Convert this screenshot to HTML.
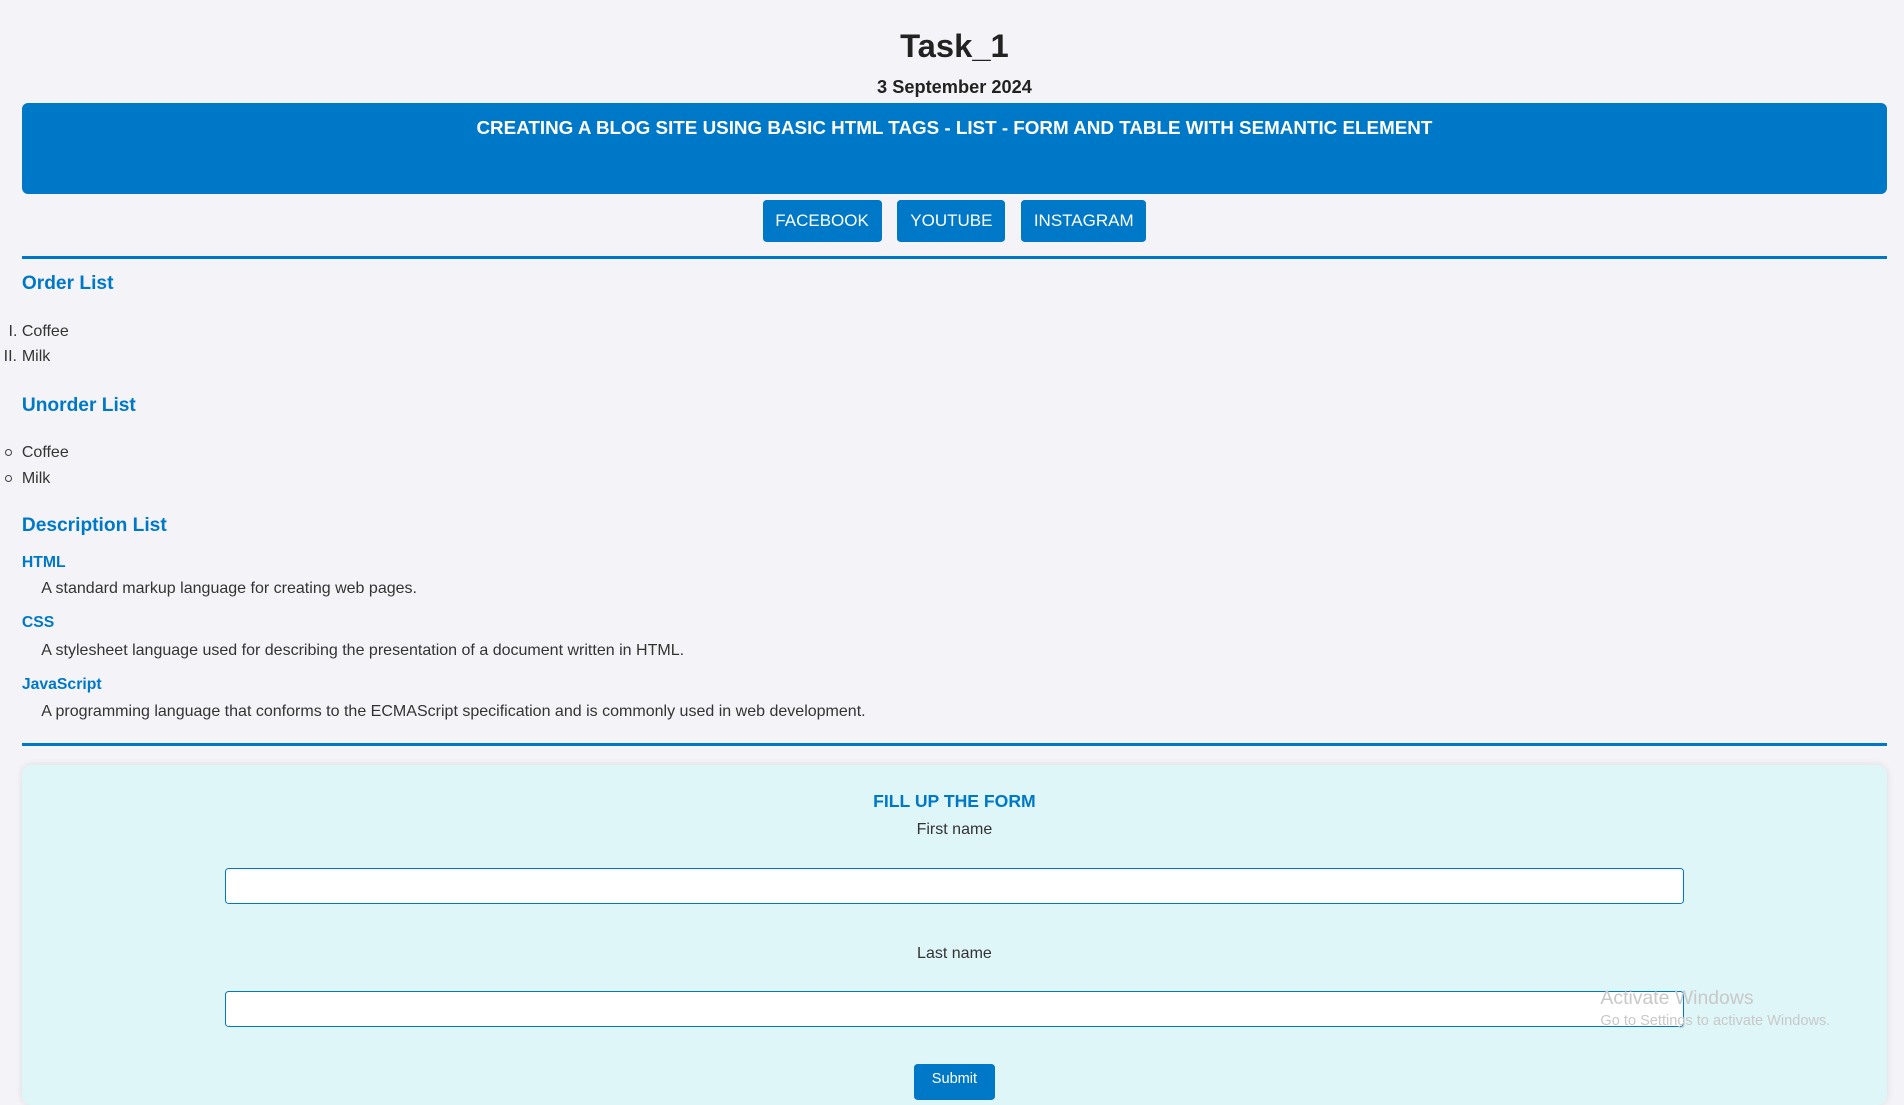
<!DOCTYPE html>
<html><head><meta charset="utf-8"><style>
html{zoom:1.21429}
body{margin:0;width:1568px;height:892px;overflow:hidden;background:#f4f4f8;font-family:"Liberation Sans",Arial,sans-serif;color:#333;position:relative}
.a{position:absolute;white-space:nowrap}
.c{left:0;width:1572px;text-align:center}
.blue{color:#0078c8}
.btn{position:absolute;top:165px;height:34px;background:#0078c8;color:#fff;border-radius:3px;font-size:14px;line-height:34px;text-align:center}
.t{font-size:13.2px;line-height:16px}
h3{margin:0;font-size:15.8px;font-weight:bold;color:#0078c8;position:absolute;left:18px}
.dt{font-size:13px;font-weight:bold;color:#0078c8;left:18px}
.inp{position:absolute;left:185px;width:1200px;height:28px;background:#fff;border:1px solid #0078c8;border-radius:3px}
</style></head><body>
<div class="a c" style="top:22px;font-size:27px;font-weight:bold;color:#222">Task_1</div>
<div class="a c" style="top:63px;font-size:15px;font-weight:bold;color:#222">3 September 2024</div>
<div class="a" style="left:18px;top:85px;width:1536px;height:75px;background:#0078c8;border-radius:5px"></div>
<div class="a c" style="top:96px;font-size:15.5px;font-weight:bold;color:#fff">CREATING A BLOG SITE USING BASIC HTML TAGS - LIST - FORM AND TABLE WITH SEMANTIC ELEMENT</div>
<div class="btn" style="left:628px;width:98px">FACEBOOK</div>
<div class="btn" style="left:739px;width:89px">YOUTUBE</div>
<div class="btn" style="left:841px;width:103px">INSTAGRAM</div>
<div class="a" style="left:18px;top:211px;width:1536px;height:2px;background:#0078c8"></div>
<h3 style="top:225px">Order List</h3>
<div class="a t" style="left:7px;top:265px">I.</div><div class="a t" style="left:18px;top:265px">Coffee</div>
<div class="a t" style="left:3px;top:286px">II.</div><div class="a t" style="left:18px;top:286px">Milk</div>
<h3 style="top:325px">Unorder List</h3>
<div class="a" style="left:4px;top:370px;width:4px;height:4px;border:1px solid #444;border-radius:50%"></div><div class="a t" style="left:18px;top:365px">Coffee</div>
<div class="a" style="left:4px;top:391px;width:4px;height:4px;border:1px solid #444;border-radius:50%"></div><div class="a t" style="left:18px;top:386px">Milk</div>
<h3 style="top:424px">Description List</h3>
<div class="a dt" style="top:456px">HTML</div>
<div class="a t" style="left:34px;top:477px">A standard markup language for creating web pages.</div>
<div class="a dt" style="top:506px">CSS</div>
<div class="a t" style="left:34px;top:528px">A stylesheet language used for describing the presentation of a document written in HTML.</div>
<div class="a dt" style="top:557px">JavaScript</div>
<div class="a t" style="left:34px;top:578px">A programming language that conforms to the ECMAScript specification and is commonly used in web development.</div>
<div class="a" style="left:18px;top:612px;width:1536px;height:2px;background:#0078c8"></div>
<div class="a" style="left:18px;top:630px;width:1536px;height:280px;background:#dff6f8;border-radius:8px;box-shadow:0 0 6px rgba(0,0,0,.1)"></div>
<div class="a c blue" style="top:651px;font-size:14.5px;font-weight:bold">FILL UP THE FORM</div>
<div class="a c t" style="top:675px">First name</div>
<div class="inp" style="top:715px"></div>
<div class="a c t" style="top:777px">Last name</div>
<div class="inp" style="top:816px"></div>
<div class="a" style="left:753px;top:876px;width:66px;height:30px;background:#0078c8;border-radius:3px;color:#fff;font-size:12px;text-align:center;line-height:26px">Submit</div>
<div class="a" style="left:1318px;top:813px;font-size:16px;color:#c8c8c8">Activate Windows</div>
<div class="a" style="left:1318px;top:834px;font-size:12px;color:#c8c8c8">Go to Settings to activate Windows.</div>
</body></html>
